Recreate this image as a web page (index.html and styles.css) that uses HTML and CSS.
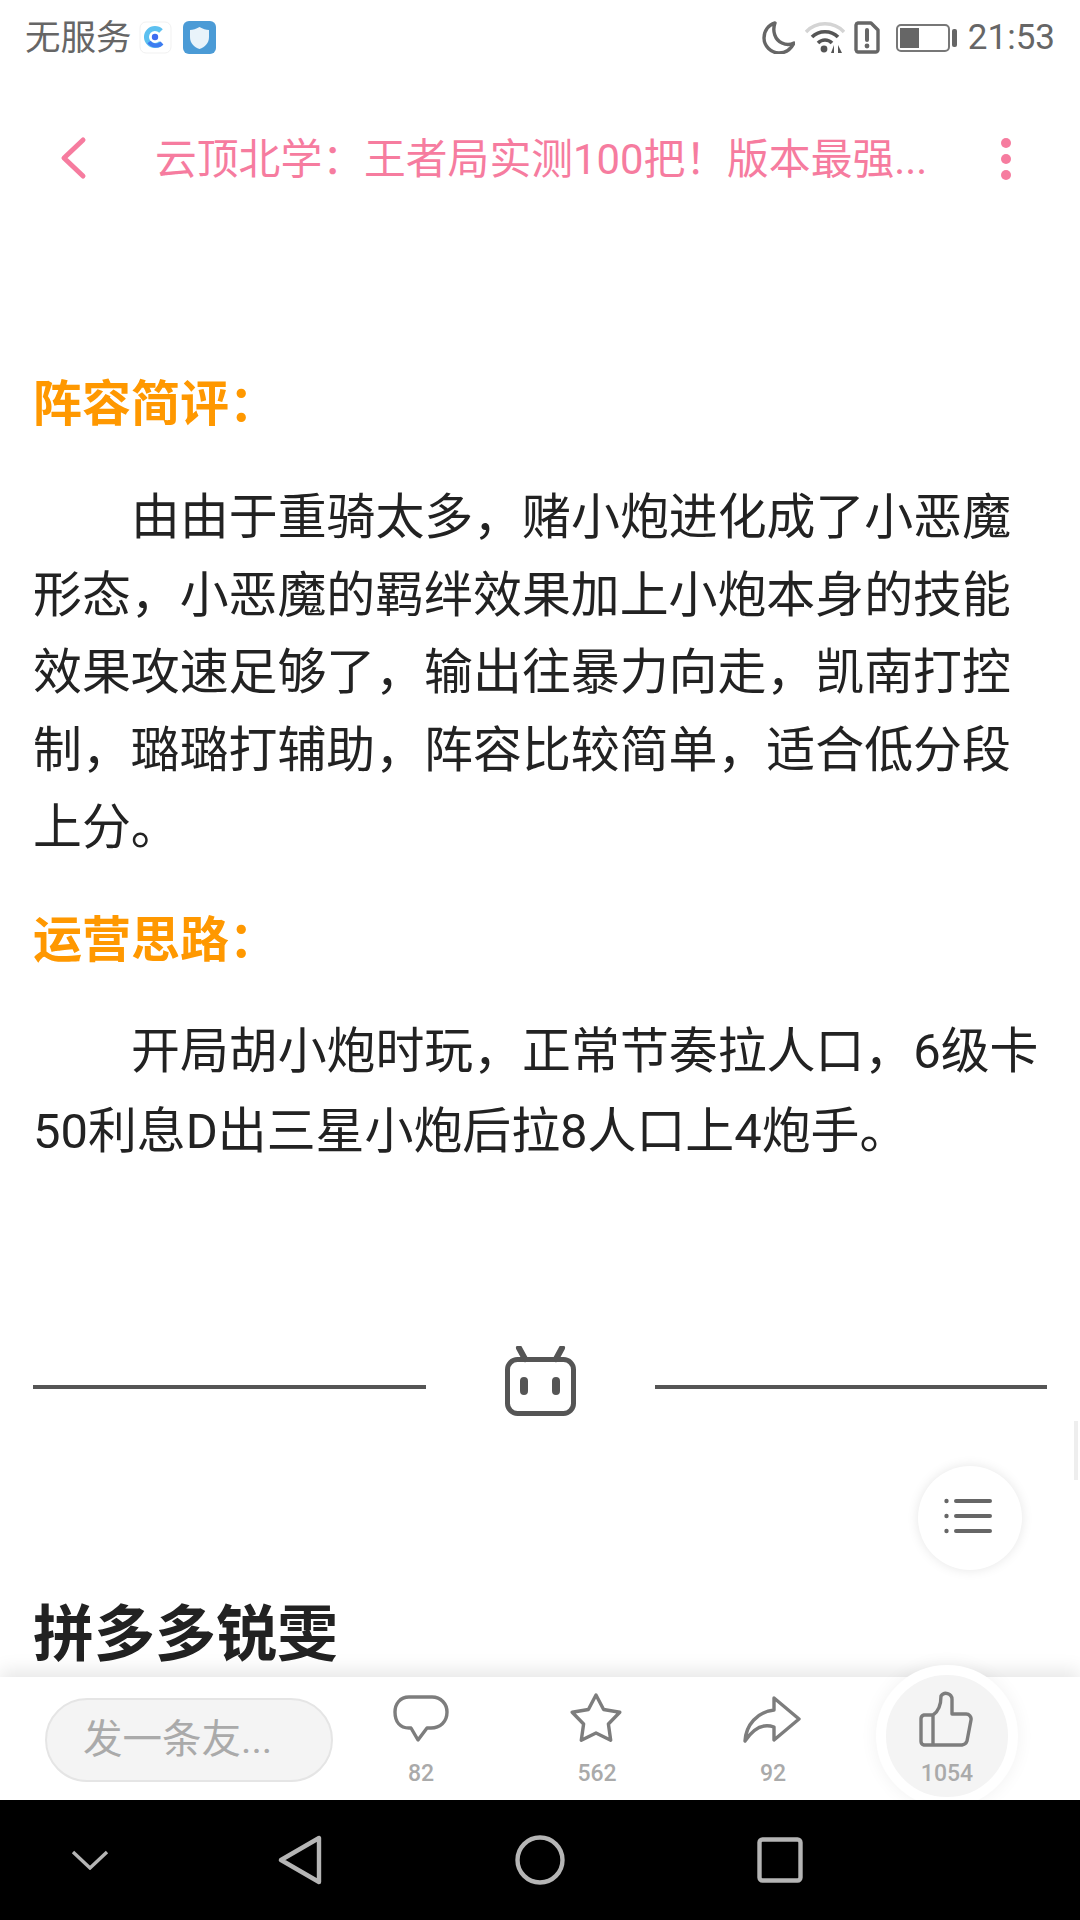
FILE: index.html
```html
<!DOCTYPE html>
<html lang="zh-CN">
<head>
  <title>云顶北学</title>
  <meta charset="utf-8" />
  <link rel="stylesheet" href="styles.css">
</head>
<body>
<div class="screen">

  <div class="status">
    <div class="status-left">
      <span class="carrier">无服务</span>
      <svg class="app-c" width="33" height="33" viewBox="0 0 33 33">
        <rect x="1" y="1" width="31" height="31" rx="6" fill="#fff" stroke="#f1f1f1"/>
        <path d="M22 10 A8.5 8.5 0 1 0 22 22" fill="none" stroke="#5cc0f0" stroke-width="5"/>
        <path d="M10 21 A8.5 8.5 0 0 0 23 22" fill="none" stroke="#3d7cf0" stroke-width="4"/>
        <circle cx="16" cy="16" r="3.2" fill="#3d6cf0"/>
      </svg>
      <svg class="app-s" width="33" height="33" viewBox="0 0 33 33">
        <rect width="33" height="33" rx="6" fill="#4b9bd6"/>
        <path d="M16.5 6 C20 8 23 9 26 9 V16 C26 22 22 26 16.5 28 C11 26 7 22 7 16 V9 C10 9 13 8 16.5 6 Z" fill="#e9f3fa"/>
      </svg>
    </div>
    <div class="status-right">
      <svg width="33" height="33" viewBox="0 0 33 33">
        <path d="M13 2 C6 4 2 10 2 17 C2 25 9 32 17 32 C24 32 29 28 32 22 C28 24 24 24 20 22 C13 19 10 10 13 2 Z" fill="none" stroke="#666" stroke-width="3.4" stroke-linejoin="round"/>
      </svg>
      <svg class="wifi" width="40" height="33" viewBox="0 0 40 33">
        <path d="M1 11 C11 0 29 0 39 11" fill="none" stroke="#d4d4d4" stroke-width="3.4"/>
        <path d="M7 16 C14 9 26 9 33 16" fill="none" stroke="#555" stroke-width="3.6"/>
        <path d="M13 22 C17 18 23 18 27 22" fill="none" stroke="#555" stroke-width="3.6"/>
        <circle cx="19" cy="28" r="3.4" fill="#555"/>
        <path d="M29 24 V32 H26 Z M33 24 L37 32 H33 Z" fill="#555"/>
      </svg>
      <svg class="sim" width="26" height="33" viewBox="0 0 26 33">
        <path d="M4 2 H17 L24 9 V29 A2.5 2.5 0 0 1 21.5 31 H4 A2.5 2.5 0 0 1 2 29 V4 A2.5 2.5 0 0 1 4 2 Z" fill="none" stroke="#666" stroke-width="3.4" stroke-linejoin="round"/>
        <path d="M13 9 V19" stroke="#666" stroke-width="4" stroke-linecap="round"/>
        <circle cx="13" cy="25" r="2.4" fill="#666"/>
      </svg>
      <div class="battery"><div class="battery-fill"></div></div>
      <div class="battery-cap"></div>
      <span class="clock">21:53</span>
    </div>
  </div>

  <div class="topbar">
    <svg class="back" width="28" height="44" viewBox="0 0 28 44">
      <path d="M24 4 L5 22 L24 40" fill="none" stroke="#f67c9f" stroke-width="5" stroke-linecap="round" stroke-linejoin="round"/>
    </svg>
    <div class="title">云顶北学：王者局实测100把！版本最强...</div>
    <div class="more"><i></i><i></i><i></i></div>
  </div>

  <div class="article">
    <h3 class="sub">阵容简评：</h3>
    <p class="para">由由于重骑太多，赌小炮进化成了小恶魔形态，小恶魔的羁绊效果加上小炮本身的技能效果攻速足够了，输出往暴力向走，凯南打控制，璐璐打辅助，阵容比较简单，适合低分段上分。</p>
    <h3 class="sub sub-next">运营思路：</h3>
    <p class="para para-tall">开局胡小炮时玩，正常节奏拉人口，6级卡50利息D出三星小炮后拉8人口上4炮手。</p>

    <div class="divider">
      <div class="rule"></div>
      <svg width="71" height="70" viewBox="0 0 71 70">
        <path d="M20 13 L14 2 M51 13 L57 2" stroke="#555" stroke-width="6" stroke-linecap="round"/>
        <rect x="2.5" y="13.5" width="66" height="54" rx="10" fill="none" stroke="#555" stroke-width="5"/>
        <path d="M19 35 V45 M51 35 V45" stroke="#555" stroke-width="8" stroke-linecap="round"/>
      </svg>
      <div class="rule"></div>
    </div>

    <h2 class="next-title">拼多多锐雯</h2>

    <div class="float-btn">
      <svg width="48" height="36" viewBox="0 0 48 36">
        <path d="M12 3 H46 M12 18 H46 M12 33 H46" stroke="#666" stroke-width="4" stroke-linecap="round"/>
        <circle cx="2.5" cy="3" r="2.2" fill="#666"/>
        <circle cx="2.5" cy="18" r="2.2" fill="#666"/>
        <circle cx="2.5" cy="33" r="2.2" fill="#666"/>
      </svg>
    </div>
    <div class="scroll-thumb"></div>
  </div>

  <div class="actions">
    <div class="comment-box">发一条友...</div>
    <div class="action">
      <div class="action-icon">
        <svg width="56" height="48" viewBox="0 0 56 48">
          <path d="M16 2 H39 C48 2 54 9 54 17 C54 27 47 33 38 33 H34 L25 45 L18 33 H16 C7 33 2 27 2 17 C2 9 7 2 16 2 Z" fill="none" stroke="#7d7d7d" stroke-width="3.4" stroke-linejoin="round"/>
        </svg>
      </div>
      <span class="count">82</span>
    </div>
    <div class="action">
      <div class="action-icon star">
        <svg width="52" height="52" viewBox="0 0 52 52">
          <path d="M26 2 L33.6 16.5 L49.8 19.3 L38.4 31 L40.7 47.2 L26 40 L11.3 47.2 L13.6 31 L2.2 19.3 L18.4 16.5 Z" fill="none" stroke="#7d7d7d" stroke-width="3.4" stroke-linejoin="round"/>
        </svg>
      </div>
      <span class="count">562</span>
    </div>
    <div class="action">
      <div class="action-icon share">
        <svg width="58" height="48" viewBox="0 0 58 48">
          <path d="M2 46 C3 30 14 17 31 15 V3 L56 24 L31 45 V32 C20 28 10 34 2 46 Z" fill="none" stroke="#7d7d7d" stroke-width="3.4" stroke-linejoin="round"/>
        </svg>
      </div>
      <span class="count">92</span>
    </div>
    <div class="action like">
      <div class="action-icon thumb">
        <svg width="54" height="56" viewBox="0 0 54 56">
          <path d="M14 24 H5 A4 4 0 0 0 2 28 V50 A4 4 0 0 0 5 54 H43 A6 6 0 0 0 48 50 L52 29 A5 5 0 0 0 47 23 H33 V8 A6 6 0 0 0 22 5 C22 14 20 20 14 24 V54" fill="none" stroke="#7d7d7d" stroke-width="3.4" stroke-linejoin="round"/>
        </svg>
      </div>
      <span class="count">1054</span>
    </div>
  </div>

  <div class="navbar">
    <svg width="38" height="20" viewBox="0 0 38 20">
      <path d="M2 2 L19 18 L36 2" fill="none" stroke="#b5b5b5" stroke-width="3.4"/>
    </svg>
    <svg width="44" height="50" viewBox="0 0 44 50">
      <path d="M41 3 V47 L3 25 Z" fill="none" stroke="#b5b5b5" stroke-width="4.4" stroke-linejoin="round"/>
    </svg>
    <svg width="50" height="50" viewBox="0 0 50 50">
      <circle cx="25" cy="25" r="22.5" fill="none" stroke="#b5b5b5" stroke-width="4.4"/>
    </svg>
    <svg width="46" height="46" viewBox="0 0 46 46">
      <rect x="2.5" y="2.5" width="41" height="41" rx="3" fill="none" stroke="#b5b5b5" stroke-width="4.4"/>
    </svg>
  </div>

</div>
</body>
</html>
```

FILE: styles.css
```css
* {
    box-sizing: border-box;
}
body {
    margin: 0;
    font-family: Roboto, "Noto Sans CJK SC", sans-serif;
    background: #fff;
}
.screen {
    width: 1080px;
    height: 1920px;
    display: flex;
    flex-direction: column;
    overflow: hidden;
}

/* status bar */
.status {
    height: 75px;
    flex: none;
    display: flex;
    justify-content: space-between;
    align-items: center;
    padding: 0 25px 0 25px;
    color: #666;
}
.status-left, .status-right {
    display: flex;
    align-items: center;
}
.carrier {
    font-size: 35.5px;
    line-height: 72px;
    width: 114px;
}
.app-s {
    margin-left: 11px;
}
.wifi {
    margin-left: 10px;
}
.sim {
    margin-left: 9px;
}
.battery {
    width: 54px;
    height: 28px;
    margin-left: 16px;
    border: 2px solid #777;
    border-radius: 5px;
    padding: 2px;
}
.battery-fill {
    width: 19px;
    height: 100%;
    background: #666;
}
.battery-cap {
    width: 5px;
    height: 18px;
    margin-left: 2px;
    background: #666;
    border-radius: 2px;
}
.clock {
    font-size: 35px;
    line-height: 77px;
    margin-left: 11px;
}

/* top bar */
.topbar {
    height: 166px;
    flex: none;
    display: flex;
    align-items: center;
    padding-left: 59px;
    color: #f67c9f;
}
.back {
    flex: none;
}
.title {
    width: 820px;
    margin-left: 68px;
    font-size: 41.8px;
    line-height: 60px;
    padding-top: 4px;
    white-space: nowrap;
}
.more {
    margin-left: 26px;
    margin-top: 2px;
    display: flex;
    flex-direction: column;
    gap: 6px;
}
.more i {
    display: block;
    width: 10px;
    height: 10px;
    border-radius: 50%;
    background: #f67c9f;
}

/* article */
.article {
    position: relative;
    flex: 1;
    padding: 125px 33px 0 33px;
    color: #222;
    overflow: hidden;
}
.sub {
    margin: 0;
    font-size: 49px;
    line-height: 78px;
    font-weight: bold;
    color: #ff9800;
}
.sub-next {
    margin-top: 35px;
}
.para {
    margin: 35px 0 0 0;
    font-size: 48.9px;
    line-height: 77.5px;
    text-indent: 98px;
}
.para-tall {
    margin-top: 32px;
    line-height: 80px;
}
.divider {
    margin-top: 174px;
    display: flex;
    align-items: flex-end;
    gap: 79px;
}
.rule {
    flex: 1;
    height: 4px;
    margin-bottom: 27px;
    background: #555;
}
.next-title {
    margin: 177px 0 0 0;
    font-size: 61px;
    line-height: 84px;
    font-weight: bold;
    color: #222;
}
.float-btn {
    position: absolute;
    left: 918px;
    top: 1225px;
    width: 104px;
    height: 104px;
    border-radius: 50%;
    background: #fff;
    box-shadow: 0 0 12px rgba(0, 0, 0, 0.1);
    display: flex;
    align-items: center;
    justify-content: center;
    padding: 0 4px 4px 0;
}
.scroll-thumb {
    position: absolute;
    left: 1074px;
    top: 1180px;
    width: 4px;
    height: 59px;
    background: #eee;
}

/* bottom action bar */
.actions {
    position: relative;
    height: 123px;
    flex: none;
    display: flex;
    padding-left: 45px;
    background: #fff;
    box-shadow: 0 -6px 18px rgba(0, 0, 0, 0.1);
}
.comment-box {
    width: 288px;
    height: 84px;
    margin-top: 21px;
    padding-left: 36px;
    background: #f4f4f4;
    border: 2px solid #e5e5e5;
    border-radius: 42px;
    color: #aaa;
    font-size: 39.5px;
    line-height: 80px;
}
.action {
    position: relative;
    width: 176px;
    padding-top: 12px;
    display: flex;
    flex-direction: column;
    align-items: center;
}
.action-icon {
    position: relative;
    height: 60px;
    display: flex;
    align-items: center;
}
.star {
    padding-right: 2px;
}
.share {
    padding-right: 3px;
}
.thumb {
    padding-right: 2px;
}
.count {
    position: relative;
    margin-top: 13px;
    font-size: 23px;
    line-height: 24px;
    font-weight: 500;
    color: #aaa;
}
.like {
    margin-left: -2px;
}
.like::before {
    content: "";
    position: absolute;
    left: 17px;
    top: -12px;
    width: 122px;
    height: 122px;
    border: 10px solid #fff;
    border-radius: 50%;
    background: #f4f4f4;
    box-shadow: 0 0 18px rgba(0, 0, 0, 0.06);
}

/* nav bar */
.navbar {
    position: relative;
    height: 120px;
    flex: none;
    display: flex;
    align-items: center;
    padding: 0 0 0 71px;
    background: #000;
}
.navbar svg:nth-child(2) {
    margin-left: 169px;
}
.navbar svg:nth-child(3) {
    margin-left: 193px;
}
.navbar svg:nth-child(4) {
    margin-left: 192px;
}
```
